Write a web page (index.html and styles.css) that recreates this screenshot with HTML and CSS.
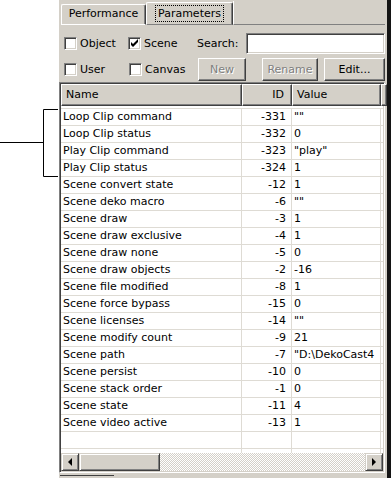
FILE: index.html
```html
<!DOCTYPE html>
<html lang="en">
  <head>
    <meta charset="utf-8" />
    <title>Parameters</title>
    <link rel="stylesheet" href="styles.css">
  </head>
  <body>
    <div class="annot">
      <svg width="59" height="478" viewBox="0 0 59 478">
        <path d="M0 142.5H43.5M58 109.5H43.5V176.5H58" stroke="#000" fill="none" />
      </svg>
    </div>

    <div class="panel">
      <div class="tabs">
        <div class="tab">Performance</div>
        <div class="tab tab-active"><span class="focus">Parameters</span></div>
        <div class="tab-fill"></div>
      </div>

      <div class="opts opts-top">
        <label class="check check-object"><span class="box"></span>Object</label>
        <label class="check check-scene">
          <span class="box">
            <svg width="9" height="9" viewBox="0 0 9 9"><path d="M1 3v3l2 2 5-5V0L3 5z" fill="#000" /></svg>
          </span>Scene
        </label>
        <span class="search-label">Search:</span>
        <span class="search-input"></span>
      </div>

      <div class="opts opts-bottom">
        <label class="check check-user"><span class="box"></span>User</label>
        <label class="check check-canvas"><span class="box"></span>Canvas</label>
        <button class="btn btn-new" disabled>New</button>
        <button class="btn btn-rename" disabled>Rename</button>
        <button class="btn btn-edit">Edit...</button>
      </div>

      <div class="list">
        <div class="list-head">
          <div class="hcell">Name</div>
          <div class="hcell hcell-id">ID</div>
          <div class="hcell">Value</div>
          <div class="hcell hcell-rest"></div>
        </div>
        <div class="list-body" id="rows"></div>
        <div class="hscroll">
          <div class="sb-btn"><span class="arrow arrow-left"></span></div>
          <div class="sb-thumb"></div>
          <div class="sb-track"></div>
          <div class="sb-btn"><span class="arrow arrow-right"></span></div>
        </div>
      </div>
      <div class="tab-edge"></div>
    </div>

    <script>
      const params = [
        ["Loop Clip command", -331, '""'],
        ["Loop Clip status", -332, "0"],
        ["Play Clip command", -323, '"play"'],
        ["Play Clip status", -324, "1"],
        ["Scene convert state", -12, "1"],
        ["Scene deko macro", -6, '""'],
        ["Scene draw", -3, "1"],
        ["Scene draw exclusive", -4, "1"],
        ["Scene draw none", -5, "0"],
        ["Scene draw objects", -2, "-16"],
        ["Scene file modified", -8, "1"],
        ["Scene force bypass", -15, "0"],
        ["Scene licenses", -14, '""'],
        ["Scene modify count", -9, "21"],
        ["Scene path", -7, '"D:\\DekoCast4'],
        ["Scene persist", -10, "0"],
        ["Scene stack order", -1, "0"],
        ["Scene state", -11, "4"],
        ["Scene video active", -13, "1"],
      ];

      const rows = document.getElementById("rows");
      let html = "";
      for (const [name, id, value] of params) {
        html += `<div class="row"><div class="cell">${name}</div><div class="cell cell-id">${id}</div><div class="cell">${value}</div><div class="cell cell-rest"></div></div>`;
      }
      // empty rows keep the grid going down to the scrollbar
      for (let i = 0; i < 2; i++) {
        html += `<div class="row"><div class="cell"></div><div class="cell cell-id"></div><div class="cell"></div><div class="cell cell-rest"></div></div>`;
      }
      rows.innerHTML = html;
    </script>
  </body>
</html>
```

FILE: styles.css
```css
/* Page */
body {
  margin: 0;
  height: 478px;
  overflow: hidden;
  display: flex;
  background: #fff;
  font-family: "DejaVu Sans", sans-serif;
  font-size: 11px;
  color: #000;
}

.annot {
  width: 59px;
  flex: none;
}

.annot svg {
  display: block;
}

/* Dialog panel */
.panel {
  flex: 1;
  display: flex;
  flex-direction: column;
  background: #d4d0c8;
  border-right: 4px solid #141414;
  min-width: 0;
}

/* Tabs */
.tabs {
  display: flex;
  align-items: flex-end;
  height: 25px;
  padding-left: 2px;
}

.tab {
  box-sizing: border-box;
  height: 21px;
  width: 85px;
  line-height: 18px;
  text-align: center;
  border: 1px solid;
  border-color: #fff #404040 #fff #fff;
  box-shadow: inset -1px 0 #808080;
  border-radius: 2px 2px 0 0;
}

.tab-active {
  height: 23px;
  width: 87px;
  padding-top: 2px;
  border-bottom-color: #808080;
}

.focus {
  display: inline-block;
  padding: 0 2px;
  line-height: 15px;
  border: 1px dotted #000;
}

.tab-fill {
  flex: 1;
  height: 24px;
  border-left: 1px solid #fff;
  border-bottom: 1px solid #808080;
  box-sizing: border-box;
  margin-right: 2px;
}

/* Option rows */
.opts {
  display: flex;
  align-items: center;
  padding-left: 5px;
}

.opts-top {
  margin-top: 7px;
  height: 22px;
}

.opts-bottom {
  margin-top: 4px;
  height: 23px;
}

.check {
  display: flex;
  align-items: center;
  gap: 3px;
}

.box {
  box-sizing: border-box;
  width: 13px;
  height: 13px;
  display: flex;
  align-items: center;
  justify-content: center;
  background: #fff;
  border: 1px solid;
  border-color: #808080 #fff #fff #808080;
  box-shadow: inset 1px 1px #404040, inset -1px -1px #d4d0c8;
}

.check-object { width: 64px; }
.check-scene { width: 69px; }
.check-user { width: 65px; }
.check-canvas { width: 69px; }

.search-label {
  width: 49px;
}

.search-input {
  flex: 1;
  box-sizing: border-box;
  height: 21px;
  margin-right: 2px;
  background: #fff;
  border: 1px solid;
  border-color: #808080 #fff #fff #808080;
  box-shadow: inset 1px 1px #404040, inset -1px -1px #d4d0c8;
}

/* Buttons */
.btn {
  box-sizing: border-box;
  height: 23px;
  padding: 0;
  font: inherit;
  background: #d4d0c8;
  border: 1px solid;
  border-color: #fff #404040 #404040 #fff;
  box-shadow: inset -1px -1px #808080;
  color: #000;
}

.btn:disabled {
  color: #808080;
  text-shadow: 1px 1px #fff;
}

.btn-new { width: 48px; }
.btn-rename { width: 56px; margin-left: 16px; }
.btn-edit { width: 61px; margin-left: 6px; }

/* List view */
.list {
  flex: 1;
  display: flex;
  flex-direction: column;
  margin: 1px 2px 2px 0;
  background: #fff;
  border: 1px solid;
  border-color: #808080 #fff #fff #808080;
  box-shadow: inset 1px 1px #404040, inset -1px -1px #d4d0c8;
  padding: 1px;
  min-height: 0;
}

.list-head,
.row {
  display: grid;
  grid-template-columns: 181px 50px 89px 1fr;
}

.list-head {
  height: 22px;
}

.hcell {
  box-sizing: border-box;
  background: #d4d0c8;
  line-height: 19px;
  padding-left: 4px;
  border: 1px solid;
  border-color: #fff #404040 #404040 #fff;
  box-shadow: inset -1px -1px #808080;
}

.hcell-id {
  text-align: right;
  padding: 0 7px 0 0;
}

.list-body {
  flex: 1;
  overflow: hidden;
  padding-top: 2px;
}

.row {
  height: 17px;
  box-sizing: border-box;
  border-top: 1px solid #dedbd4;
}

.cell {
  line-height: 16px;
  padding-left: 2px;
  white-space: nowrap;
  overflow: hidden;
  border-right: 1px solid #dedbd4;
}

.cell-id {
  text-align: right;
  padding: 0 5px 0 0;
}

.cell-rest {
  border-right: 0;
}

/* Horizontal scrollbar */
.hscroll {
  display: flex;
  height: 18px;
  flex: none;
}

.sb-btn,
.sb-thumb {
  box-sizing: border-box;
  background: #d4d0c8;
  border: 1px solid;
  border-color: #d4d0c8 #404040 #404040 #d4d0c8;
  box-shadow: inset 1px 1px #fff, inset -1px -1px #808080;
}

.sb-btn {
  width: 18px;
  display: flex;
  align-items: center;
  justify-content: center;
}

.sb-thumb {
  width: 81px;
}

.sb-track {
  flex: 1;
  background-image: repeating-conic-gradient(#fff 0 25%, #d4d0c8 0 50%);
  background-size: 2px 2px;
}

.arrow {
  width: 0;
  height: 0;
  border-top: 4px solid transparent;
  border-bottom: 4px solid transparent;
}

.arrow-left {
  border-right: 4px solid #000;
}

.arrow-right {
  border-left: 4px solid #000;
}

/* edge of the lower tab strip, cut off by the screenshot */
.tab-edge {
  width: 54px;
  height: 2px;
  margin-left: 1px;
  border-top: 1px solid #404040;
  flex: none;
}
```
